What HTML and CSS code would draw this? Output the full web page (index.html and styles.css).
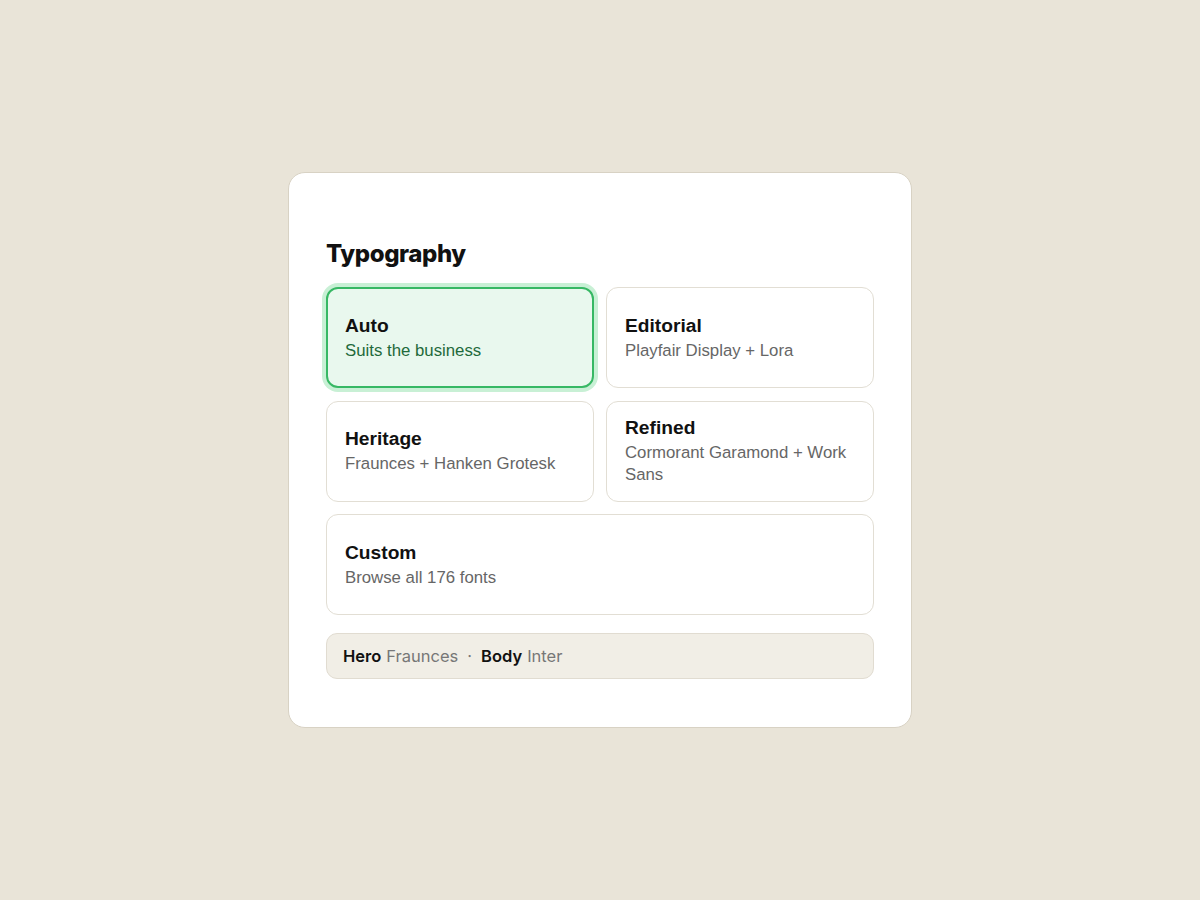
FILE: index.html
```html
<!DOCTYPE html>
<html lang="en">
<head>
<meta charset="utf-8">
<title>Typography</title>
<link rel="stylesheet" href="styles.css">
</head>
<body>
<main class="panel">
  <h1 class="title">Typography</h1>
  <div class="options">
    <div class="card card-selected">
      <div class="card-name">Auto</div>
      <div class="card-desc">Suits the business</div>
    </div>
    <div class="card">
      <div class="card-name">Editorial</div>
      <div class="card-desc">Playfair Display + Lora</div>
    </div>
    <div class="card">
      <div class="card-name">Heritage</div>
      <div class="card-desc">Fraunces + Hanken Grotesk</div>
    </div>
    <div class="card">
      <div class="card-name">Refined</div>
      <div class="card-desc">Cormorant Garamond + Work Sans</div>
    </div>
    <div class="card card-wide">
      <div class="card-name">Custom</div>
      <div class="card-desc">Browse all 176 fonts</div>
    </div>
  </div>
  <div class="summary">
    <span class="summary-key">Hero</span> <span class="summary-val">Fraunces</span>
    <span class="summary-dot">·</span>
    <span class="summary-key">Body</span> <span class="summary-val">Inter</span>
  </div>
</main>
</body>
</html>
```

FILE: styles.css
```css
* { box-sizing: border-box; }

html, body { margin: 0; padding: 0; }

body {
  background: #e9e4d8;
  min-height: 100vh;
  display: flex;
  align-items: center;
  justify-content: center;
  font-family: "Liberation Sans", Arial, sans-serif;
  color: #111;
}

.panel {
  width: 624px;
  background: #ffffff;
  border: 1px solid #d8d2c4;
  border-radius: 17px;
  padding: 66px 37px 48px;
}

.title {
  margin: 0 0 19px;
  font-family: Inter, "Liberation Sans", sans-serif;
  font-size: 24px;
  line-height: 29px;
  font-weight: 800;
  color: #111;
  letter-spacing: -0.4px;
}

.options {
  display: grid;
  grid-template-columns: 1fr 1fr;
  column-gap: 12px;
  row-gap: 12.5px;
}

.card {
  min-height: 101px;
  border: 1px solid #e2ded4;
  border-radius: 12px;
  background: #fff;
  padding: 10px 19px 10px 18px;
  display: flex;
  flex-direction: column;
  justify-content: center;
}

.card-wide { grid-column: 1 / span 2; }

.card-selected {
  background: #e9f8ee;
  border: 2px solid #37b864;
  padding-left: 17px;
  box-shadow: 0 0 0 4px #c8f0d5;
}

.card-name {
  font-size: 19.2px;
  line-height: 24px;
  font-weight: 700;
  color: #111;
}

.card-desc {
  font-size: 16.8px;
  line-height: 22px;
  color: #666;
  margin-top: 2px;
}

.card-selected .card-desc { color: #1f6a3b; }

.summary {
  margin-top: 18px;
  height: 46px;
  background: #f1eee6;
  border: 1px solid #e1dcd1;
  border-radius: 11px;
  padding: 0 16px;
  display: flex;
  align-items: center;
  gap: 5px;
  font-family: Inter, "Liberation Sans", sans-serif;
  font-size: 16.5px;
}

.summary-key { color: #111; font-weight: 600; }
.summary-val { color: #777; }
.summary-dot { color: #777; margin: 0 4px; }
```
